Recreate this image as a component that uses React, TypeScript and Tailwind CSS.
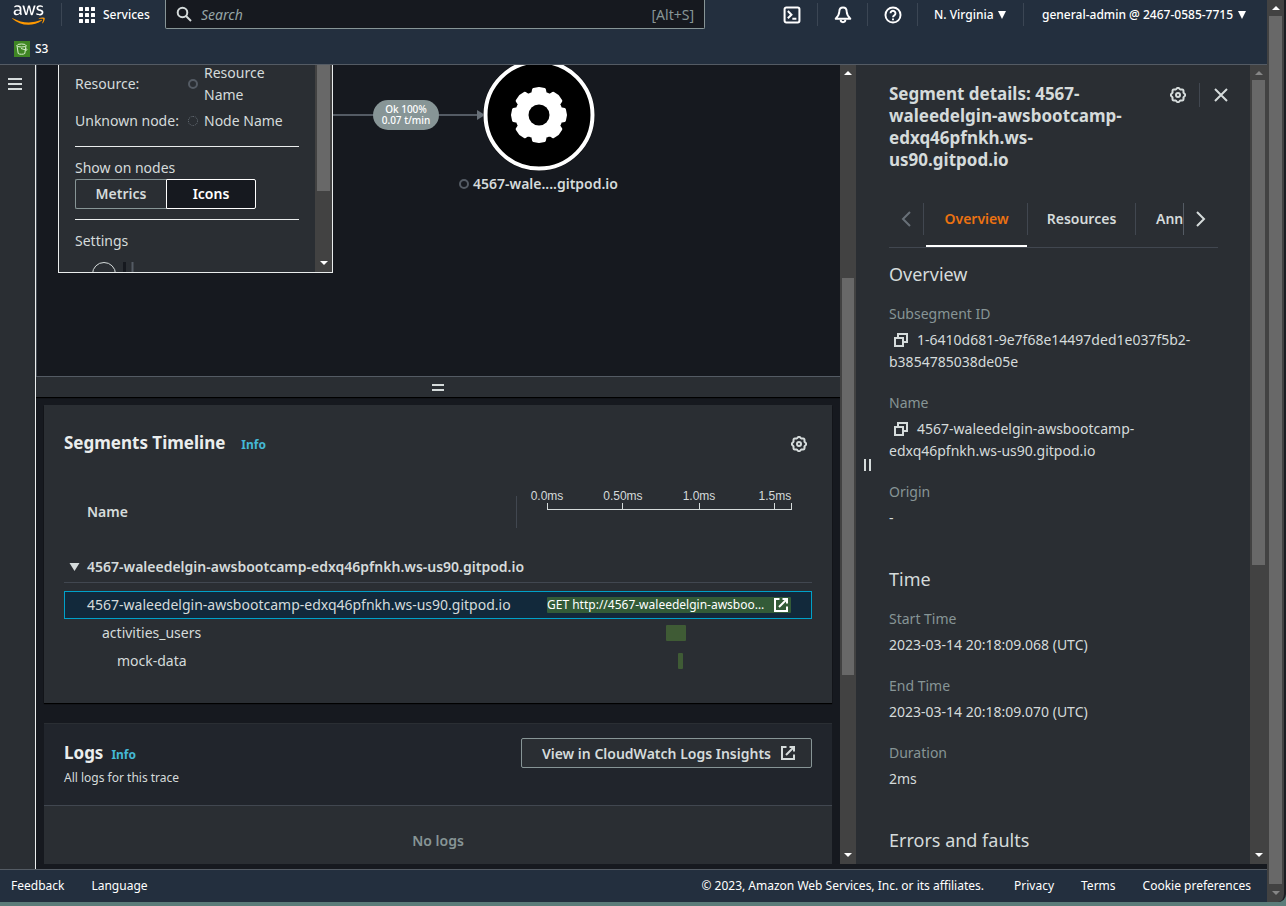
import React from "react";
import { FaAws } from "react-icons/fa";

type IconProps = { className?: string };

/* Closed outline whose radius swings between two values, eight times round. */
function scallop(center: number, radius: number, depth: number): string {
  const points: string[] = [];
  for (let i = 0; i < 96; i++) {
    const a = (i / 96) * Math.PI * 2;
    const r = radius + depth * Math.cos(a * 8);
    points.push(`${(center + r * Math.sin(a)).toFixed(2)} ${(center - r * Math.cos(a)).toFixed(2)}`);
  }
  return `M${points.join("L")}Z`;
}

/* Solid cog with eight flat teeth, the first one pointing up. */
function cog(center: number, outer: number, inner: number): string {
  const points: string[] = [];
  const at = (deg: number, r: number) => {
    const a = (deg * Math.PI) / 180;
    points.push(`${(center + r * Math.sin(a)).toFixed(2)} ${(center - r * Math.cos(a)).toFixed(2)}`);
  };
  for (let t = 0; t < 8; t++) {
    const mid = t * 45;
    at(mid - 16, inner);
    at(mid - 12, outer);
    at(mid, outer + 0.5);
    at(mid + 12, outer);
    at(mid + 16, inner);
  }
  return `M${points.join("L")}Z`;
}

function SettingsIcon({ className = "" }: IconProps) {
  return (
    <svg viewBox="0 0 16 16" className={`size-4 ${className}`} fill="none" stroke="currentColor" strokeWidth="2" aria-hidden="true">
      <path d={scallop(8, 6.6, 0.6)} strokeLinejoin="round" />
      <circle cx="8" cy="8" r="2" />
    </svg>
  );
}

function ExternalIcon({ className = "" }: IconProps) {
  return (
    <svg viewBox="0 0 16 16" className={`size-4 ${className}`} fill="none" stroke="currentColor" strokeWidth="2" aria-hidden="true">
      <path d="M6.500 2H2v12h12v-4.500" />
      <path d="M9.500 2H14v4.500M6 10l8-8" />
    </svg>
  );
}

function CopyIcon() {
  return (
    <svg viewBox="0 0 16 16" className="inline size-4" fill="none" stroke="currentColor" strokeWidth="2" aria-hidden="true">
      <path d="M2 5h8v8H2z" />
      <path d="M5 5V1h9v8h-4" />
    </svg>
  );
}

function Caret() {
  return (
    <svg viewBox="0 0 8 8" className="size-2" fill="currentColor" aria-hidden="true">
      <path d="M0 0h8L4 8z" />
    </svg>
  );
}

function ScrollArrow({ down = false, dim = false }: { down?: boolean; dim?: boolean }) {
  return (
    <svg viewBox="0 0 8 4" className={`h-1 w-2 ${dim ? "text-[#868686]" : "text-white"}`} fill="currentColor" aria-hidden="true">
      <path d={down ? "M0 0h8L4 4z" : "M0 4h8L4 0z"} />
    </svg>
  );
}

type ScrollbarProps = {
  className?: string;
  topDim?: boolean;
  bottomDim?: boolean;
  hideTop?: boolean;
  topHeight?: string;
  before: number;
  thumb: number;
};

/* Thumb offset and length are shares of the track. */
function Scrollbar({ className = "", topDim, bottomDim, hideTop, topHeight = "h-[15px]", before, thumb }: ScrollbarProps) {
  return (
    <div className={`flex shrink-0 flex-col bg-[#424242] px-[2px] ${className}`} aria-hidden="true">
      {!hideTop && (
        <div className={`flex items-center justify-center ${topHeight}`}>
          <ScrollArrow dim={topDim} />
        </div>
      )}
      <div className="flex min-h-0 flex-1 flex-col">
        <div style={{ height: `${before}%` }} />
        <div className="bg-[#686868]" style={{ height: `${thumb}%` }} />
      </div>
      <div className="flex h-[18px] items-center justify-center">
        <ScrollArrow down dim={bottomDim} />
      </div>
    </div>
  );
}

function Header() {
  return (
    <header className="flex h-[65px] shrink-0 flex-col border-b border-[#545b64] bg-[#232f3e] text-[12px] font-medium whitespace-nowrap text-white">
      <div className="flex h-[29px]">
        <a href="#home" aria-label="AWS" className="flex w-[61px] items-center pl-[12px]">
          <span className="relative block h-[26px] w-[33px]">
            <FaAws className="absolute inset-0 size-full [clip-path:inset(0_0_38%_0)]" />
            <FaAws className="absolute inset-0 size-full text-[#ff9900] [clip-path:inset(62%_0_0_0)]" />
          </span>
        </a>
        <button className="my-[3px] flex w-[104px] items-center gap-2 border-l border-[#3b4654] pl-[17px]">
          <svg viewBox="0 0 16 16" className="size-4" fill="currentColor" aria-hidden="true">
            {[0, 6, 12].map((y) => [0, 6, 12].map((x) => <rect key={`${x}-${y}`} x={x} y={y} width="4" height="4" rx="0.5" />))}
          </svg>
          Services
        </button>
        <label className="mr-[62px] flex flex-1 items-center gap-[9px] rounded-b-[2px] border-x border-b border-[#879596] bg-[#16191f] px-[10px] text-[14px] font-normal text-[#879596]">
          <svg viewBox="0 0 16 16" className="size-4 text-[#d5dbdb]" fill="none" stroke="currentColor" strokeWidth="2" aria-hidden="true">
            <circle cx="6.500" cy="6.500" r="4.800" />
            <path d="M10 10l5 5" />
          </svg>
          <input type="search" aria-label="Search" placeholder="Search" className="min-w-0 flex-1 bg-transparent outline-none placeholder:text-[#95a5a6] placeholder:italic" />
          <span>[Alt+S]</span>
        </label>
        <nav className="my-[3px] flex">
          <button aria-label="CloudShell" className="flex w-[50px] items-center justify-center">
            <svg viewBox="0 0 16 16" className="size-[18px]" fill="none" stroke="currentColor" strokeWidth="1.800" aria-hidden="true">
              <rect x="1.400" y="1.400" width="13.200" height="13.200" rx="1.500" />
              <path d="M4.300 4.500 7.500 7.700 4.300 10.900M8.300 11.300h3.600" />
            </svg>
          </button>
          <button aria-label="Notifications" className="flex w-[50px] items-center justify-center border-l border-[#3b4654]">
            <svg viewBox="0 0 16 16" className="size-[18px]" fill="none" stroke="currentColor" strokeWidth="1.700" strokeLinejoin="round" aria-hidden="true">
              <path d="M8 1.300C5.600 1.300 4.700 3.200 4.700 5.200 4.700 7.500 3.800 9 1.500 11.300h13C12.200 9 11.300 7.500 11.300 5.200 11.300 3.200 10.400 1.300 8 1.300z" />
              <path d="M5.900 12.300a2.100 2.100 0 0 0 4.200 0" />
            </svg>
          </button>
          <button aria-label="Help" className="flex w-[50px] items-center justify-center border-l border-[#3b4654]">
            <svg viewBox="0 0 16 16" className="size-[18px]" fill="none" stroke="currentColor" strokeWidth="1.700" aria-hidden="true">
              <circle cx="8" cy="8" r="6.700" />
              <path d="M5.800 6.500a2.200 2.200 0 1 1 3.400 1.800C8.400 8.800 8 9.100 8 10M8 11v1.600" />
            </svg>
          </button>
          <button className="flex w-[106px] items-center gap-1 border-l border-[#3b4654] pl-4">
            N. Virginia <Caret />
          </button>
          <button className="flex w-[244px] items-center gap-[5px] border-l border-[#3b4654] pl-[18px]">
            general-admin @ 2467-0585-7715 <Caret />
          </button>
        </nav>
      </div>
      <nav className="flex flex-1 items-center pt-1 pl-[14px]">
        <a href="#s3" className="flex items-center gap-[5px]">
          <svg viewBox="0 0 16 16" className="size-4" aria-hidden="true">
            <rect width="16" height="16" fill="#3f8624" />
            <g fill="none" stroke="#d9f0cf" strokeWidth="1">
              <ellipse cx="7.500" cy="4.500" rx="4.500" ry="1.500" />
              <path d="M3 4.500l1.200 8c1 1 5.600 1 6.600 0l1.200-8M7 7.500l5.500 1.700c1-.3.300-1.300-.7-2" />
            </g>
          </svg>
          S3
        </a>
      </nav>
    </header>
  );
}

function Legend() {
  return (
    <section aria-label="Legend" className="absolute -top-1 left-[21px] flex h-[212px] w-[275px] border border-[#eaeded] bg-[#2a2e33]">
      <div className="flex min-w-0 flex-1 flex-col overflow-hidden pl-4 text-[14px] leading-[22px]">
        <dl className="mr-4 grid grid-cols-[113px_1fr] items-center gap-y-1 border-b border-[#eaeded] pb-[14px]">
          <dt>Resource:</dt>
          <dd className="flex items-center gap-[6px]">
            <span className="size-[10px] shrink-0 rounded-full border-2 border-[#545b64]" />
            <span className="max-w-[70px]">Resource Name</span>
          </dd>
          <dt className="whitespace-nowrap">Unknown node:</dt>
          <dd className="flex items-center gap-[6px] whitespace-nowrap">
            <span className="size-[10px] shrink-0 rounded-full border border-dotted border-[#687078]" />
            Node Name
          </dd>
        </dl>
        <div className="mr-4 border-b border-[#eaeded] pt-[10px] pb-[10px]">
          <p>Show on nodes</p>
          <div className="flex font-semibold">
            <button className="h-[30px] w-[91px] rounded-l-[2px] border border-r-0 border-[#879596]">Metrics</button>
            <button aria-pressed="true" className="h-[30px] w-[90px] rounded-r-[2px] border border-white bg-[#16191f] text-white">
              Icons
            </button>
          </div>
        </div>
        <p className="pt-[10px]">Settings</p>
        <svg viewBox="0 0 50 24" className="mt-[10px] ml-4 h-6 w-[50px] shrink-0" fill="none" aria-hidden="true">
          <circle cx="13" cy="12" r="11.500" stroke="#d5dbdb" />
          <path d="M33.500 0v24" stroke="#16191f" strokeWidth="3" />
          <path d="M41.500 0v24" stroke="#545b64" strokeWidth="2" />
        </svg>
      </div>
      <Scrollbar className="w-[17px]" hideTop before={0} thumb={67} />
    </section>
  );
}

function TraceMap() {
  return (
    <section aria-label="Trace map" className="relative h-[311px] shrink-0 overflow-hidden border-l border-[#414750]">
      <svg className="absolute top-[42px] left-[296px] h-4 w-[152px]" viewBox="0 0 152 16" aria-hidden="true">
        <path d="M0 8h146" stroke="#545b64" strokeWidth="2" />
        <path d="M144 3l8 5-8 5z" fill="#687078" />
      </svg>
      <span className="absolute top-[35px] left-[336px] flex h-[30px] w-[66px] flex-col items-center justify-center rounded-full bg-[#879596] text-[10px] leading-[11px] font-medium text-white">
        <span>Ok 100%</span>
        <span>0.07 t/min</span>
      </span>
      <svg className="absolute -top-[6px] left-[446px] size-28" viewBox="0 0 112 112" aria-hidden="true">
        <circle cx="56" cy="56" r="56" fill="#0b0c0f" />
        <circle cx="56" cy="56" r="53.500" fill="#000" stroke="#fff" strokeWidth="4" />
        <path d={cog(56, 26, 22.5)} fill="#fff" stroke="#fff" strokeWidth="3" strokeLinejoin="round" />
        <circle cx="56" cy="56" r="10.500" fill="#000" />
      </svg>
      <span className="absolute top-[108px] left-[422px] flex items-center gap-1 text-[14px] leading-[22px] font-semibold">
        <span className="size-[10px] rounded-full border-2 border-[#545b64]" />
        4567-wale....gitpod.io
      </span>
      <Legend />
    </section>
  );
}

const ticks = [
  { at: "0%", label: "0.0ms" },
  { at: "31.1%", label: "0.50ms" },
  { at: "62.3%", label: "1.0ms" },
  { at: "93.4%", label: "1.5ms" },
];

function TimeAxis() {
  return (
    <svg className="block h-6 w-full overflow-visible font-['Liberation_Sans',sans-serif] text-[12px] font-normal" shapeRendering="crispEdges">
      <g stroke="#d5dbdb">
        <line x1="0" x2="100%" y1="22.500" y2="22.500" />
        {[...ticks.map((t) => t.at), "100%"].map((x) => (
          <line key={x} x1={x} x2={x} y1="16" y2="23" />
        ))}
      </g>
      {ticks.map((t) => (
        <text key={t.at} x={t.at} y="13" textAnchor="middle" fill="#d5dbdb">
          {t.label}
        </text>
      ))}
    </svg>
  );
}

function Bar({ left, width }: { left: number; width: number }) {
  return (
    <div className="flex">
      <div style={{ width: `${left}%` }} />
      <div className="h-4 rounded-[1px] bg-[#3f5b35]" style={{ width: `${width}%` }} />
    </div>
  );
}

function Timeline() {
  return (
    <section className="mx-2 mt-2 h-[298px] shrink-0 bg-[#2a2e33] px-5 shadow-[0_1px_1px_#000]">
      <div className="flex h-[78px] items-center justify-between pr-[5px]">
        <h2 className="flex items-baseline gap-4 text-[17px] leading-[22px] font-bold text-[#eaeded]">
          Segments Timeline
          <a href="#timeline-info" className="text-[12px] text-[#44b9d6]">Info</a>
        </h2>
        <button aria-label="Timeline settings">
          <SettingsIcon />
        </button>
      </div>
      <table className="w-full table-fixed border-separate border-spacing-0 text-left text-[14px] leading-[22px]">
        <colgroup>
          <col />
          <col className="w-[295px]" />
        </colgroup>
        <thead>
          <tr className="h-[58px]">
            <th className="p-0 font-semibold">
              <span className="flex h-8 items-center border-r border-[#414750] pl-[23px]">Name</span>
            </th>
            <th aria-label="Time" className="p-0 pr-[21px] pb-[26px] pl-[30px]">
              <TimeAxis />
            </th>
          </tr>
        </thead>
        <tbody>
          <tr>
            <th colSpan={2} className="border-b border-[#414750] p-0 pt-[15px] pb-1">
              <button className="flex items-center gap-[7px] pl-[5px] font-semibold">
                <svg viewBox="0 0 10 8" className="h-2 w-[11px]" fill="currentColor" aria-hidden="true">
                  <path d="M0 0h10L5 8z" />
                </svg>
                4567-waleedelgin-awsbootcamp-edxq46pfnkh.ws-us90.gitpod.io
              </button>
            </th>
          </tr>
          <tr aria-hidden="true" className="h-2">
            <td colSpan={2} className="p-0" />
          </tr>
          <tr className="h-7">
            <td className="border-y border-l border-[#00a1c9] bg-[#12293b] p-0 pl-[22px]">4567-waleedelgin-awsbootcamp-edxq46pfnkh.ws-us90.gitpod.io</td>
            <td className="border-y border-r border-[#00a1c9] bg-[#12293b] p-0 pr-5 pl-[30px]">
              <a href="#request" className="flex h-4 items-center gap-2 rounded-[1px] bg-[#335b38] pr-[2px] text-[12px] leading-4 text-white">
                <span className="min-w-0 flex-1 truncate">GET http://4567-waleedelgin-awsbootcamp-edxq46pfnkh.ws-us90.gitpod.io/api/activities</span>
                <ExternalIcon className="shrink-0" />
              </a>
            </td>
          </tr>
          <tr className="h-7">
            <td className="p-0 pl-[38px]">activities_users</td>
            <td className="p-0 pr-[21px] pl-[30px]">
              <Bar left={48.8} width={8.2} />
            </td>
          </tr>
          <tr className="h-7">
            <td className="p-0 pl-[53px]">mock-data</td>
            <td className="p-0 pr-[21px] pl-[30px]">
              <Bar left={53.7} width={2} />
            </td>
          </tr>
        </tbody>
      </table>
    </section>
  );
}

function Logs() {
  return (
    <section className="mx-2 mt-5 flex min-h-0 flex-1 flex-col bg-[#2a2e33]">
      <div className="flex h-[83px] shrink-0 items-start justify-between border-y border-t-[#2a2e33] border-b-[#414750] bg-[#21252c] px-5 pt-[14px]">
        <div className="pt-1">
          <h2 className="flex items-baseline gap-2 text-[17px] leading-[22px] font-bold text-[#eaeded]">
            Logs
            <a href="#logs-info" className="text-[12px] text-[#44b9d6]">Info</a>
          </h2>
          <p className="pt-1 text-[12px] leading-4">All logs for this trace</p>
        </div>
        <button className="flex h-[30px] items-center gap-[9px] rounded-[2px] border border-[#879596] bg-[#2a2e33] pr-[15px] pl-5 text-[14px] font-semibold">
          View in CloudWatch Logs Insights
          <ExternalIcon />
        </button>
      </div>
      <p className="pt-6 text-center text-[14px] leading-[22px] font-semibold text-[#879596]">No logs</p>
    </section>
  );
}

type Field = { label: string; value: string; copy?: boolean };

const groups: { title: string; fields: Field[] }[] = [
  {
    title: "Overview",
    fields: [
      { label: "Subsegment ID", value: "1-6410d681-9e7f68e14497ded1e037f5b2-b3854785038de05e", copy: true },
      { label: "Name", value: "4567-waleedelgin-awsbootcamp-edxq46pfnkh.ws-us90.gitpod.io", copy: true },
      { label: "Origin", value: "-" },
    ],
  },
  {
    title: "Time",
    fields: [
      { label: "Start Time", value: "2023-03-14 20:18:09.068 (UTC)" },
      { label: "End Time", value: "2023-03-14 20:18:09.070 (UTC)" },
      { label: "Duration", value: "2ms" },
    ],
  },
  { title: "Errors and faults", fields: [] },
];

function Details() {
  return (
    <aside className="flex w-[411px] shrink-0 bg-[#2a2e33]">
      <div className="flex w-[22px] shrink-0 items-center justify-center">
        <button aria-label="Resize panel" className="h-3 w-[7px] border-x-2 border-[#d5dbdb]" />
      </div>
      <div className="flex min-w-0 flex-1 flex-col overflow-hidden pr-8 pl-[11px]">
        <div className="flex items-start justify-between pt-[18px]">
          <h2 className="w-[245px] text-[17px] leading-[22px] font-bold">Segment details: 4567-waleedelgin-awsbootcamp-edxq46pfnkh.ws-us90.gitpod.io</h2>
          <div className="-mr-[11px] flex h-6 items-center">
            <button aria-label="Panel settings" className="pr-[13px]">
              <SettingsIcon />
            </button>
            <button aria-label="Close panel" className="border-l border-[#414750] py-1 pl-[13px]">
              <svg viewBox="0 0 16 16" className="size-4" fill="none" stroke="currentColor" strokeWidth="2" aria-hidden="true">
                <path d="M2 2l12 12M14 2L2 14" />
              </svg>
            </button>
          </div>
        </div>
        <div className="mt-8 flex h-[45px] shrink-0 items-start border-b border-[#414750] text-[14px] leading-8 font-semibold" role="tablist">
          <button aria-label="Previous tabs" disabled className="flex h-8 w-[35px] shrink-0 items-center justify-center border-r border-[#414750] text-[#687078]">
            <svg viewBox="0 0 10 16" className="h-4 w-[10px]" fill="none" stroke="currentColor" strokeWidth="2" aria-hidden="true">
              <path d="M9 1L2 8l7 7" />
            </svg>
          </button>
          <div className="flex min-w-0 flex-1 overflow-hidden pl-[2px]">
            <button role="tab" aria-selected="true" className="h-11 w-[101px] shrink-0 border-b-2 border-white pb-[10px] text-[#ec7211]">
              Overview
            </button>
            <button role="tab" aria-selected="false" className="h-8 w-[109px] shrink-0 border-x border-[#414750]">
              Resources
            </button>
            <button role="tab" aria-selected="false" className="h-8 shrink-0 pl-5">
              Annotations
            </button>
          </div>
          <button aria-label="Next tabs" className="flex h-8 w-[35px] shrink-0 items-center justify-center border-l border-[#545b64]">
            <svg viewBox="0 0 10 16" className="h-4 w-[10px]" fill="none" stroke="currentColor" strokeWidth="2" aria-hidden="true">
              <path d="M1 1l7 7-7 7" />
            </svg>
          </button>
        </div>
        <div className="flex flex-col gap-[39px] pt-[15px] text-[14px] leading-[22px]">
          {groups.map((g) => (
            <section key={g.title}>
              <h3 className="pb-[18px] text-[18px]">{g.title}</h3>
              <dl className="flex flex-col gap-[19px]">
                {g.fields.map((f) => (
                  <div key={f.label}>
                    <dt className="pb-1 text-[#879596]">{f.label}</dt>
                    <dd>
                      {f.copy && (
                        <button aria-label={`Copy ${f.label}`} className="mr-2 ml-1 leading-4">
                          <CopyIcon />
                        </button>
                      )}
                      {f.value}
                    </dd>
                  </div>
                ))}
              </dl>
            </section>
          ))}
        </div>
      </div>
      <Scrollbar className="w-[17px]" topDim before={0} thumb={63.3} />
    </aside>
  );
}

function Footer() {
  return (
    <footer className="flex h-[33px] shrink-0 items-center border-t border-[#545b64] bg-[#232f3e] pr-4 pl-[11px] text-[12px] whitespace-nowrap text-white">
      <nav className="flex flex-1 gap-[27px]">
        <a href="#feedback">Feedback</a>
        <a href="#language">Language</a>
      </nav>
      <span className="pr-[30px]">© 2023, Amazon Web Services, Inc. or its affiliates.</span>
      <nav className="flex gap-[27px]">
        <a href="#privacy">Privacy</a>
        <a href="#terms">Terms</a>
        <a href="#cookies">Cookie preferences</a>
      </nav>
    </footer>
  );
}

export default function App() {
  return (
    <div className="h-screen bg-[#5b7c79] pb-1 font-['Noto_Sans','Open_Sans',sans-serif] text-[#d5dbdb]">
      <div className="flex h-full overflow-hidden rounded-br-lg border-r-2 border-[#1b1d22] bg-[#16191f]">
        <div className="flex min-w-0 flex-1 flex-col">
          <Header />
          <div className="flex min-h-0 flex-1">
            <nav className="w-9 shrink-0 border-r border-[#eaeded] bg-[#2a2e33] pt-[13px] pl-2">
              <button aria-label="Open navigation" className="block">
                <svg viewBox="0 0 14 12" className="h-3 w-[14px]" fill="currentColor" aria-hidden="true">
                  <path d="M0 0h14v2H0zM0 5h14v2H0zM0 10h14v2H0z" />
                </svg>
              </button>
            </nav>
            <div className="flex min-w-0 flex-1 pb-[5px]">
              <main className="flex min-w-0 flex-1 flex-col overflow-hidden">
                <TraceMap />
                <div className="flex h-[21px] shrink-0 items-center justify-center border-t border-[#545b64] bg-[#2a2e33] shadow-[0_1px_1px_#000]">
                  <button aria-label="Resize map" className="h-[7px] w-3 border-y-2 border-[#d5dbdb]" />
                </div>
                <Timeline />
                <Logs />
              </main>
              <Scrollbar className="w-4" before={25.8} thumb={51.9} />
              <Details />
            </div>
          </div>
          <Footer />
        </div>
        <Scrollbar className="w-[17px]" topHeight="h-4" bottomDim before={0} thumb={100} />
      </div>
    </div>
  );
}
